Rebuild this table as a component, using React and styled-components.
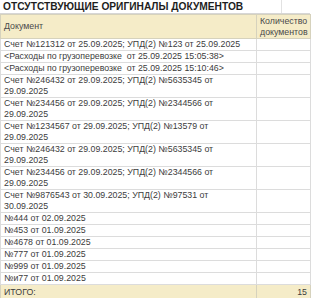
import React from 'react';
import styled, { createGlobalStyle } from 'styled-components';

const GlobalStyle = createGlobalStyle`
  html, body {
    margin: 0;
    padding: 0;
    background: #ffffff;
  }
  body {
    font-family: "Liberation Sans", Arial, sans-serif;
  }
`;

const Sheet = styled.div`
  width: 310px;
  color: #3c3c3c;
`;

const TitleRow = styled.div`
  display: grid;
  grid-template-columns: 282px 1fr;
  height: 13px;
  border-bottom: 1px solid #d6d6d6;
`;

const Title = styled.div`
  padding-left: 3px;
  font-size: 10.2px;
  line-height: 13px;
  font-weight: bold;
  color: #1e1e1e;
  white-space: nowrap;
  border-right: 1px solid #e2e2e2;
`;

const Table = styled.table`
  width: 310px;
  border-collapse: collapse;
  table-layout: fixed;
  font-size: 8.8px;
  line-height: 11px;
`;

const HeadCell = styled.th`
  background: #f5ecc8;
  font-weight: normal;
  color: #4a4a4a;
  height: 23px;
  padding: 0 3px;
  border: 1px solid #d6d2bd;
  text-align: ${(p) => (p.$center ? 'center' : 'left')};
  vertical-align: middle;
`;

const Cell = styled.td`
  padding: 0 3px;
  border: 1px solid #dcdcdc;
  vertical-align: top;
  white-space: pre-wrap;
  text-align: ${(p) => (p.$right ? 'right' : 'left')};
`;

const TotalCell = styled.td`
  background: #f5ecc8;
  padding: 1px 3px 0;
  height: 12px;
  border: 1px solid #d6d2bd;
  text-align: ${(p) => (p.$right ? 'right' : 'left')};
`;

const rows = [
  'Счет №121312 от 25.09.2025; УПД(2) №123 от 25.09.2025',
  '<Расходы по грузоперевозке  от 25.09.2025 15:05:38>',
  '<Расходы по грузоперевозке  от 25.09.2025 15:10:46>',
  'Счет №246432 от 29.09.2025; УПД(2) №5635345 от 29.09.2025',
  'Счет №234456 от 29.09.2025; УПД(2) №2344566 от 29.09.2025',
  'Счет №1234567 от 29.09.2025; УПД(2) №13579 от 29.09.2025',
  'Счет №246432 от 29.09.2025; УПД(2) №5635345 от 29.09.2025',
  'Счет №234456 от 29.09.2025; УПД(2) №2344566 от 29.09.2025',
  'Счет №9876543 от 30.09.2025; УПД(2) №97531 от 30.09.2025',
  '№444 от 02.09.2025',
  '№453 от 01.09.2025',
  '№4678 от 01.09.2025',
  '№777 от 01.09.2025',
  '№999 от 01.09.2025',
  '№и77 от 01.09.2025',
];

export default function App() {
  return (
    <Sheet>
      <GlobalStyle />
      <TitleRow>
        <Title>ОТСУТСТВУЮЩИЕ ОРИГИНАЛЫ ДОКУМЕНТОВ</Title>
        <div />
      </TitleRow>
      <Table>
        <colgroup>
          <col style={{ width: 256 }} />
          <col style={{ width: 54 }} />
        </colgroup>
        <thead>
          <tr>
            <HeadCell>Документ</HeadCell>
            <HeadCell $center>Количество документов</HeadCell>
          </tr>
        </thead>
        <tbody>
          {rows.map((r, i) => (
            <tr key={i}>
              <Cell>{r}</Cell>
              <Cell />
            </tr>
          ))}
          <tr>
            <TotalCell>ИТОГО:</TotalCell>
            <TotalCell $right>15</TotalCell>
          </tr>
        </tbody>
      </Table>
    </Sheet>
  );
}
